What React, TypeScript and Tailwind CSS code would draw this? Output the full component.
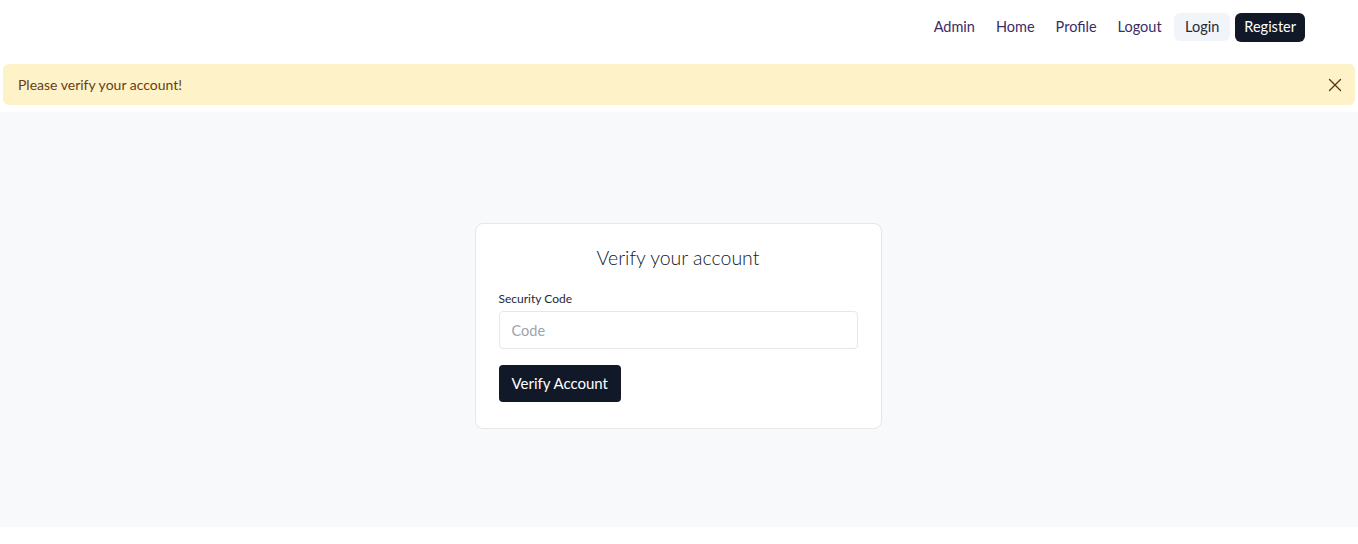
import { X } from 'lucide-react'

const font = { fontFamily: 'Lato, "Noto Sans", sans-serif' }

function NavBar() {
  const links = ['Admin', 'Home', 'Profile', 'Logout']
  return (
    <nav className="h-[54px] flex items-center justify-end pr-[53px]">
      <div className="flex items-center gap-0 text-[14.5px]">
        {links.map((l) => (
          <a key={l} className="px-[10.5px] py-1 text-[#3b2c66] cursor-pointer">
            {l}
          </a>
        ))}
        <a className="ml-[2px] px-[11px] h-[28px] flex items-center rounded-md bg-[#f1f5f9] text-[#1f2937]">Login</a>
        <a className="ml-[5px] px-[9px] h-[29px] flex items-center rounded-md bg-[#111827] text-white">Register</a>
      </div>
    </nav>
  )
}

export default function App() {
  return (
    <div style={font} className="min-h-[544px] bg-white">
      <NavBar />
      <div className="px-[3px] pt-[10px]">
        <div className="h-[41px] rounded-md bg-[#fdf2c8] flex items-center justify-between pl-[15px] pr-[9px]">
          <span className="text-[14px] text-[#6b3d12]">Please verify your account!</span>
          <X size={22} strokeWidth={1.4} className="text-[#5a3412]" />
        </div>
      </div>
      <main className="mt-[7px] h-[415px] bg-[#f8f9fb] flex items-start justify-center pt-[111px]">
        <div className="w-[407px] -ml-[2px] bg-white border border-[#e5e7eb] rounded-lg px-[23px] pt-[20px] pb-[26px]">
          <h1 className="text-center text-[19.5px] font-light text-[#111827] leading-[28px]">Verify your account</h1>
          <label className="block mt-[19px] text-[12px] text-[#1f2937] leading-[16px]">Security Code</label>
          <input
            placeholder="Code"
            className="mt-[4px] w-full h-[38px] border border-[#e5e7eb] rounded-[4px] px-3 text-[14.5px] placeholder:text-[#9ca3af] outline-none"
            style={font}
          />
          <button
            className="mt-[16px] h-[37px] px-[13px] rounded-[4px] bg-[#111827] text-white text-[15px]"
            style={font}
          >
            Verify Account
          </button>
        </div>
      </main>
    </div>
  )
}
